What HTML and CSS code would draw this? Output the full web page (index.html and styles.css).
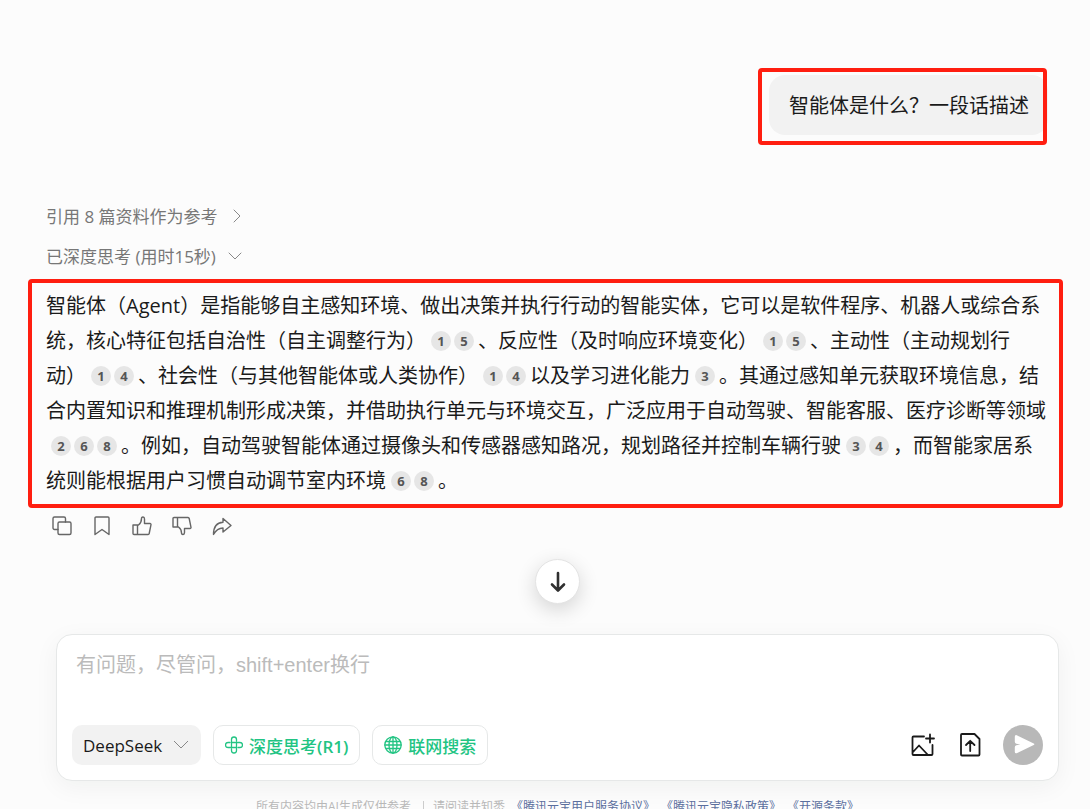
FILE: index.html
```html
<!DOCTYPE html>
<html lang="zh-CN">
<head>
<meta charset="utf-8">
<meta name="viewport" content="width=device-width, initial-scale=1">
<title>智能体是什么</title>
<link rel="stylesheet" href="styles.css">
</head>
<body>
<div class="app">
  <main class="chat">
    <div class="question-row">
      <div class="question">智能体是什么？一段话描述</div>
    </div>

    <button class="meta" type="button">引用 8 篇资料作为参考
      <svg class="chevron" viewBox="0 0 14 14"><path d="M4 1l6 6-6 6"/></svg>
    </button>
    <button class="meta meta-think" type="button">已深度思考 (用时15秒)
      <svg class="chevron" viewBox="0 0 14 14"><path d="M1 4l6 6 6-6"/></svg>
    </button>

    <article class="answer">
      <p class="answer-text">智能体（Agent）是指能够自主感知环境、做出决策并执行行动的智能实体，它可以是软件程序、机器人或综合系统，核心特征包括自治性（自主调整行为）<span class="cites"><a href="#s1">1</a><a href="#s5">5</a></span>、反应性（及时响应环境变化）<span class="cites"><a href="#s1">1</a><a href="#s5">5</a></span>、主动性（主动规划行动）<span class="cites"><a href="#s1">1</a><a href="#s4">4</a></span>、社会性（与其他智能体或人类协作）<span class="cites"><a href="#s1">1</a><a href="#s4">4</a></span>以及学习进化能力<span class="cites"><a href="#s3">3</a></span>。其通过感知单元获取环境信息，结合内置知识和推理机制形成决策，并借助执行单元与环境交互，广泛应用于自动驾驶、智能客服、医疗诊断等领域<span class="cites"><a href="#s2">2</a><a href="#s6">6</a><a href="#s8">8</a></span>。例如，自动驾驶智能体通过摄像头和传感器感知路况，规划路径并控制车辆行驶<span class="cites"><a href="#s3">3</a><a href="#s4">4</a></span>，而智能家居系统则能根据用户习惯自动调节室内环境<span class="cites"><a href="#s6">6</a><a href="#s8">8</a></span>。</p>
    </article>

    <div class="actions">
      <button type="button" aria-label="复制"><svg viewBox="0 0 20 20"><path d="M6 13.500H2.500a1.500 1.500 0 0 1-1.500-1.500V2.500A1.500 1.500 0 0 1 2.500 1H12a1.500 1.500 0 0 1 1.500 1.500V6"/><rect x="6" y="6" width="13" height="12.500" rx="1.500"/></svg></button>
      <button type="button" aria-label="收藏"><svg viewBox="0 0 20 20"><path d="M3 18.500V2a1 1 0 0 1 1-1h12a1 1 0 0 1 1 1v16.500l-7-5z"/></svg></button>
      <button type="button" aria-label="赞"><svg viewBox="0 0 20 20"><path d="M1 9h5.500c2-1.500 3-3.500 3-6.500 0-2 3-2 3 .5V7.500H18a1 1 0 0 1 1 1.200l-1.800 8.800a1.300 1.300 0 0 1-1.200 1H2a1 1 0 0 1-1-1zM5.500 9v9.500"/></svg></button>
      <button type="button" aria-label="踩"><svg viewBox="0 0 20 20"><path d="M1 11h5.500c2 1.500 3 3.500 3 6 0 2 3 2 3-.5v-4H18a1 1 0 0 0 1-1.200L17.200 2.500A1.300 1.300 0 0 0 16 1.500H2a1 1 0 0 0-1 1zM5.500 11V1.500"/></svg></button>
      <button type="button" aria-label="分享"><svg viewBox="0 0 20 20"><path d="M11 2.500l8 7-8 6.500v-4C6.500 12 4 14 1.500 18.500 1.500 11 5 6.500 11 6.200z"/></svg></button>
    </div>

    <button class="to-bottom" type="button" aria-label="回到底部">
      <svg viewBox="0 0 24 24"><path d="M12 3v17M6 14.500l6 6 6-6"/></svg>
    </button>
  </main>

  <form class="composer">
    <textarea class="prompt" rows="1" aria-label="输入问题" placeholder="有问题，尽管问，shift+enter换行"></textarea>
    <div class="toolbar">
      <label class="model">
        <select aria-label="模型"><option>DeepSeek</option></select>
        <svg class="chevron" viewBox="0 0 14 14"><path d="M0 4l7 7 7-7"/></svg>
      </label>
      <button class="chip" type="button">
        <svg viewBox="0 0 18 18"><path d="M6.500 11.500V3.500a2.500 2.500 0 0 1 5 0V5M11.500 6.500h3.500a2.500 2.500 0 0 1 0 5h-2M6.500 6.500h8M11.500 6.500v8a2.500 2.500 0 0 1-5 0V13M11.500 11.500H3a2.500 2.500 0 0 1 0-5h2"/></svg><span>深度思考<b>(R1)</b></span>
      </button>
      <button class="chip" type="button">
        <svg viewBox="0 0 18 18"><circle cx="9" cy="9" r="8.200"/><ellipse cx="9" cy="9" rx="4" ry="8.200"/><path d="M1 9h16M2 5.500h14M2 12.500h14M9 1v16"/></svg><span>联网搜索</span>
      </button>
      <span class="spacer"></span>
      <button class="tool" type="button" aria-label="上传图片"><svg viewBox="0 0 24 24"><path d="M13 3.500H2.500a1 1 0 0 0-1 1V21a1 1 0 0 0 1 1h18a1 1 0 0 0 1-1V12M2 19l6-6.500L17 22M19 1.500v8M15 5.500h8"/></svg></button>
      <button class="tool" type="button" aria-label="上传文件"><svg viewBox="0 0 24 24"><path d="M3 1h12.500L20.500 6v15.500a1 1 0 0 1-1 1H3a1 1 0 0 1-1-1V2a1 1 0 0 1 1-1zM11.200 18V8M7 12l4.200-4.200L15.500 12"/></svg></button>
      <button class="send" type="submit" aria-label="发送"><svg viewBox="0 0 40 40"><path d="M13.700 10.200l17 8.200q1.300.7 0 1.500l-17 8.300q-1.900.5-1.900-1.500v-4.500q0-1.600 1.500-1.900l4-.8-4-.8q-1.500-.3-1.500-1.900v-5.100q0-2 1.900-1.500z"/></svg></button>
    </div>
  </form>

  <footer class="legal">
    <span>所有内容均由AI生成仅供参考</span>
    <span class="divider"></span>
    <span>请阅读并知悉</span>
    <a href="#service">《腾讯元宝用户服务协议》</a>
    <a href="#privacy">《腾讯元宝隐私政策》</a>
    <a href="#opensource">《开源条款》</a>
  </footer>
</div>
</body>
</html>
```
FILE: styles.css
```css
* {
  box-sizing: border-box;
}

body {
  margin: 0;
  background: #fcfcfc;
  color: #1a1a1a;
  font-family: "Open Sans", "Noto Sans CJK SC", sans-serif;
  font-size: 20px;
  text-spacing-trim: space-all;
}

button,
select,
textarea {
  margin: 0;
  padding: 0;
  border: 0;
  background: none;
  color: inherit;
  font: inherit;
}

svg {
  display: block;
  fill: none;
  stroke: currentColor;
  stroke-linecap: round;
  stroke-linejoin: round;
}

.app {
  display: flex;
  flex-direction: column;
  height: 100vh;
  padding: 68px 27px 0 28px;
  overflow: hidden;
}

.chat {
  display: flex;
  flex-direction: column;
  align-items: flex-start;
}

/* Highlighted question bubble */
.question-row {
  position: relative;
  align-self: flex-end;
  margin-right: 15px;
  padding: 7px 0 10px 11px;
}

.question-row::after {
  content: "";
  position: absolute;
  inset: 0 1px 0 0;
  border: 4px solid #ff1e10;
  border-radius: 4px;
}

.question {
  padding: 2px 19px 0 20px;
  border-radius: 16px;
  background: #f2f2f2;
  line-height: 58px;
}

.meta {
  display: flex;
  align-items: center;
  gap: 12px;
  height: 40px;
  margin-left: 18px;
  padding-bottom: 1px;
  color: #777;
  font-size: 17px;
}

.question-row + .meta {
  margin-top: 51px;
}

.meta-think {
  gap: 12px;
}

.chevron {
  width: 14px;
  height: 14px;
  color: #888;
}

.answer {
  align-self: stretch;
  margin-top: 3px;
  padding: 5px 10px 6px 14px;
  border: 4px solid #ff1e10;
  border-radius: 4px;
}

.answer-text {
  margin: 0;
  line-height: 35px;
}

.cites {
  display: inline-flex;
  gap: 3px;
  margin: 0 4px 0 5px;
  vertical-align: 2px;
}

.cites a {
  width: 20px;
  border-radius: 50%;
  background: #e6e6e6;
  color: #555;
  font-size: 13px;
  font-weight: 700;
  line-height: 20px;
  text-align: center;
  text-decoration: none;
}

.actions {
  display: flex;
  gap: 20px;
  margin: 8px 0 0 24px;
  color: #666;
}

.actions svg {
  width: 20px;
  height: 20px;
  stroke-width: 1.4;
}

.to-bottom {
  display: grid;
  place-items: center;
  align-self: center;
  width: 45px;
  height: 45px;
  margin: 23px 0 30px 24px;
  border: 1px solid #e4e4e4;
  border-radius: 50%;
  background: #fff;
  box-shadow: 0 6px 20px rgba(0, 0, 0, 0.16);
}

.to-bottom svg {
  width: 24px;
  height: 24px;
  color: #303030;
  stroke-width: 2.6;
}

.composer {
  display: flex;
  flex-direction: column;
  margin: 0 4px 0 28px;
  padding: 15px 15px 15px;
  border: 1px solid #e6e8e8;
  border-radius: 16px;
  background: #fff;
  box-shadow: 0 6px 24px rgba(0, 30, 20, 0.05);
}

.prompt {
  height: 30px;
  margin: 0 4px 45px;
  outline: none;
  resize: none;
  overflow: hidden;
  font-family: "Liberation Sans", "Noto Sans CJK SC", sans-serif;
  line-height: 30px;
}

.prompt::placeholder {
  color: #bbb;
}

.toolbar {
  display: flex;
  align-items: center;
  gap: 12px;
  font-size: 17px;
}

.model {
  position: relative;
}

.model select {
  width: 129px;
  height: 40px;
  padding-left: 11px;
  border-radius: 10px;
  background: #f2f2f2;
  appearance: none;
  font-weight: 500;
}

.model .chevron {
  position: absolute;
  top: 12px;
  right: 13px;
  pointer-events: none;
}

.chip {
  display: flex;
  align-items: center;
  gap: 6px;
  height: 40px;
  padding: 0 11px;
  border: 1px solid #e6e8e8;
  border-radius: 10px;
  color: #22c483;
  font-weight: 500;
}

.chip b {
  font-weight: 600;
}

.chip svg {
  width: 18px;
  height: 18px;
  stroke-width: 1.3;
}

.spacer {
  flex: 1;
}

.tool svg {
  width: 24px;
  height: 24px;
  stroke-width: 1.8;
}

.tool {
  margin-right: 12px;
}

.tool + .send {
  margin-left: -4px;
}

.send {
  width: 40px;
  border-radius: 50%;
  background: #b8b8b8;
  color: #fff;
}

.send svg {
  fill: currentColor;
  stroke: none;
}

.legal {
  display: flex;
  align-items: center;
  justify-content: center;
  gap: 6px;
  margin: 16px 0 0 24px;
  color: #b8b8b8;
  font-size: 12px;
  line-height: 20px;
  white-space: nowrap;
}

.legal a {
  color: #5b6f9e;
  text-decoration: none;
}

.divider {
  width: 1px;
  height: 12px;
  margin: 0 3px 0 6px;
  background: #ccc;
}
```
